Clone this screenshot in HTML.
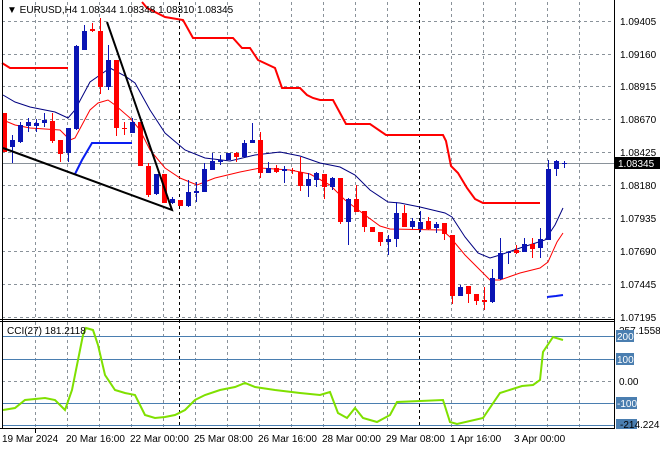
<!DOCTYPE html>
<html><head><meta charset="utf-8"><style>
body{margin:0;background:#fff;}
svg{display:block;font-family:"Liberation Sans",sans-serif;font-size:10px;}
</style></head><body>
<svg id="s" width="660" height="450" viewBox="0 0 660 450" xmlns="http://www.w3.org/2000/svg">
<rect width="660" height="450" fill="#fff"/>
<g id="grid" stroke="#8a929a" stroke-dasharray="3,3" stroke-width="1"></g>
<line x1="179.5" y1="2" x2="179.5" y2="428" stroke="#000" stroke-dasharray="3,3"/>
<line x1="419.5" y1="2" x2="419.5" y2="428" stroke="#000" stroke-dasharray="3,3"/>
<g stroke="#4a7eb0" stroke-width="1">
<line x1="2" y1="336.5" x2="614" y2="336.5"/>
<line x1="2" y1="359.5" x2="614" y2="359.5"/>
<line x1="2" y1="403.5" x2="614" y2="403.5"/>
<line x1="2" y1="425.5" x2="614" y2="425.5"/>
</g>
<line x1="2" y1="381.5" x2="614" y2="381.5" stroke="#8a929a" stroke-dasharray="3,3"/>
<line x1="2" y1="163.5" x2="614" y2="163.5" stroke="#8a929a"/>
<!-- thick red stepped line -->
<polyline fill="none" stroke="#f00" stroke-width="2" points="2,63 10,68 68,68"/>
<polyline fill="none" stroke="#f00" stroke-width="2" points="142,2 147,8 165,17 183,20 193,38 233,38 242,48 250,48 258,60 275,68 282,88 300,88 307,95 313,98 320,100 333,100 346,124 370,124 386,135 443,135 446,141 451,166 458,173 467,188 475,199 483,203 540,203"/>
<!-- blue thick -->
<polyline fill="none" stroke="#0a1ef0" stroke-width="2" points="75,174 82,160 92,143 132,143"/>
<polyline fill="none" stroke="#0a1ef0" stroke-width="2" points="547,297 556,296 563,295"/>
<!-- navy MA -->
<polyline fill="none" stroke="#000080" stroke-width="1" points="3,95 15,102 30,107 55,112 68,118 75,110 90,82 100,75 110,68 125,76 135,83 150,110 165,133 185,150 205,158 230,161 255,155 280,152 300,156 320,163 340,167 355,175 370,190 388,202 400,203 420,207 445,213 452,217 465,237 478,253 490,258 500,255 520,248 545,240 555,225 563,208"/>
<!-- thin red MA -->
<polyline fill="none" stroke="#f00" stroke-width="1" points="3,120 15,125 30,128 60,130 70,140 75,138 90,110 98,103 108,100 115,105 130,118 140,130 150,150 165,168 180,178 197,185 215,178 240,172 260,168 290,170 310,174 330,185 345,200 365,215 380,226 390,229 442,230 450,237 465,255 480,270 490,280 500,280 520,273 540,268 548,262 557,242 563,233"/>
<g id="candles"></g>
<!-- trendlines -->
<polyline fill="none" stroke="#000" stroke-width="2" points="3,148 172,210 107,22"/>
<!-- CCI -->
<polyline fill="none" stroke="#7fe000" stroke-width="2" points="3,410 15,408 25,400 45,398 55,400 65,410 72,390 80,350 83,335 86,328 93,330 98,345 105,375 115,390 125,393 135,395 145,415 155,418 165,417 175,415 185,410 195,400 205,395 220,390 235,387 245,383 255,387 275,390 300,393 320,395 330,392 338,413 347,418 355,408 363,418 377,422 390,415 397,402 443,400 450,422 457,424 483,418 500,393 522,386 533,385 540,380 543,352 553,337 563,340"/>
<!-- borders -->
<g stroke="#000" fill="none">
<line x1="614.5" y1="0" x2="614.5" y2="429"/>
<line x1="0" y1="319.5" x2="615" y2="319.5"/>
<line x1="0" y1="321.5" x2="615" y2="321.5"/>
<line x1="0" y1="428.5" x2="615" y2="428.5"/>
<line x1="2.5" y1="0" x2="2.5" y2="429"/>
</g>
<!-- price current -->
<rect x="615" y="157" width="45" height="12" fill="#000"/>
<text x="618" y="167" fill="#fff">1.08345</text>
<g fill="#000" id="yl">
<text x="620" y="25">1.09405</text>
<text x="620" y="58">1.09160</text>
<text x="620" y="90">1.08915</text>
<text x="620" y="123">1.08670</text>
<text x="620" y="156">1.08425</text>
<text x="620" y="189">1.08180</text>
<text x="620" y="222">1.07935</text>
<text x="620" y="255">1.07690</text>
<text x="620" y="288">1.07445</text>
<text x="620" y="321">1.07195</text>
<text x="619" y="334">257.1558</text>
<text x="619" y="385">0.00</text>
</g>
<g fill="#4a7eb0">
<rect x="616" y="330" width="18" height="12"/>
<rect x="616" y="353" width="18" height="12"/>
<rect x="616" y="397" width="21" height="12"/>
<rect x="616" y="419" width="21" height="10"/>
</g>
<g fill="#fff">
<text x="617" y="340">200</text>
<text x="617" y="363">100</text>
<text x="617" y="407">-100</text>
</g>
<text x="620" y="428" fill="#000">-214.2241</text>
<g fill="#000">
<text x="7" y="13">▼ EURUSD,H4  1.08344 1.08348 1.08310 1.08345</text>
<text x="7" y="334">CCI(27) 181.2118</text>
<text x="2" y="442">19 Mar 2024</text>
<text x="66" y="442">20 Mar 16:00</text>
<text x="130" y="442">22 Mar 00:00</text>
<text x="194" y="442">25 Mar 08:00</text>
<text x="258" y="442">26 Mar 16:00</text>
<text x="322" y="442">28 Mar 00:00</text>
<text x="386" y="442">29 Mar 08:00</text>
<text x="450" y="442">1 Apr 16:00</text>
<text x="514" y="442">3 Apr 00:00</text>
</g>
<g stroke="#000"><line x1="35.5" y1="429" x2="35.5" y2="433"/></g>
</svg>
<script>
var NS="http://www.w3.org/2000/svg";
var g=document.getElementById("grid");
function ln(p,x1,y1,x2,y2){var l=document.createElementNS(NS,"line");l.setAttribute("x1",x1);l.setAttribute("y1",y1);l.setAttribute("x2",x2);l.setAttribute("y2",y2);p.appendChild(l);}
for(var k=1;k<=18;k++){var x=3+32*k+0.5;if(x==179.5||x==419.5)continue;ln(g,x,2,x,318);ln(g,x,322,x,428);}
[21,54,86,119,152,185,218,251,284,317].forEach(function(y){ln(g,2,y+0.5,614,y+0.5);});
// x, top, bottom, high, low, color(b/r)
var c=[[4,113,152,113,152,'r'],[12,140,147,135,163,'b'],[20,125,142,122,143,'b'],[28,122,126,118,132,'b'],[36,123,126,119,132,'b'],[44,120,123,113,127,'b'],[52,121,141,113,143,'r'],[60,140,154,140,162,'r'],[68,128,153,128,162,'b'],[76,46,129,45,130,'b'],[84,31,50,25,50,'b'],[92,29,31,23,32,'r'],[100,31,87,18,94,'r'],[108,60,87,45,90,'b'],[116,60,128,60,136,'r'],[124,128,129,122,135,'r'],[132,122,133,118,133,'b'],[140,122,166,122,166,'r'],[148,166,195,163,197,'r'],[156,174,194,174,195,'b'],[164,174,203,174,203,'r'],[172,199,203,197,204,'b'],[180,200,206,200,206,'r'],[188,192,206,180,207,'b'],[196,191,193,182,202,'b'],[204,169,192,163,192,'b'],[212,161,170,153,170,'b'],[220,160,162,155,165,'b'],[228,153,160,153,160,'b'],[236,153,157,152,162,'r'],[244,143,157,140,157,'b'],[252,140,143,123,143,'b'],[260,140,173,132,178,'r'],[268,168,173,162,173,'b'],[276,168,172,165,173,'r'],[284,169,171,166,183,'b'],[292,170,171,168,174,'r'],[300,172,186,157,191,'r'],[308,179,186,173,197,'b'],[316,173,180,172,187,'b'],[324,174,187,174,199,'r'],[332,178,187,177,190,'b'],[340,178,222,178,224,'r'],[348,199,222,198,245,'b'],[356,199,212,185,212,'r'],[364,211,227,211,232,'r'],[372,227,232,227,232,'r'],[380,232,242,232,246,'r'],[388,239,242,235,255,'b'],[396,213,239,202,247,'b'],[404,213,227,205,227,'r'],[412,221,227,218,229,'b'],[420,222,229,211,232,'b'],[428,221,229,217,230,'r'],[436,224,228,222,233,'b'],[444,223,234,223,240,'r'],[452,235,296,235,304,'r'],[460,287,296,285,296,'b'],[468,286,294,286,303,'r'],[476,294,301,294,305,'r'],[484,300,302,287,310,'r'],[492,278,302,269,303,'b'],[500,253,279,238,280,'b'],[508,252,253,251,264,'b'],[516,250,253,245,254,'r'],[524,244,252,238,252,'b'],[532,244,249,238,258,'r'],[540,239,248,228,258,'b'],[548,169,240,160,240,'b'],[556,161,169,160,176,'b'],[564,163,164,161,168,'b']];
var cg=document.getElementById("candles");
c.forEach(function(d){var col=d[5]=='b'?'#0a14b4':'#f00';var x=d[0];
var w=document.createElementNS(NS,"line");w.setAttribute("x1",x+0.5);w.setAttribute("x2",x+0.5);w.setAttribute("y1",d[3]);w.setAttribute("y2",d[4]);w.setAttribute("stroke",col);cg.appendChild(w);
var r=document.createElementNS(NS,"rect");r.setAttribute("x",x-2);r.setAttribute("y",d[1]);r.setAttribute("width",5);r.setAttribute("height",Math.max(1,d[2]-d[1]));r.setAttribute("fill",col);cg.appendChild(r);});
</script>
</body></html>
